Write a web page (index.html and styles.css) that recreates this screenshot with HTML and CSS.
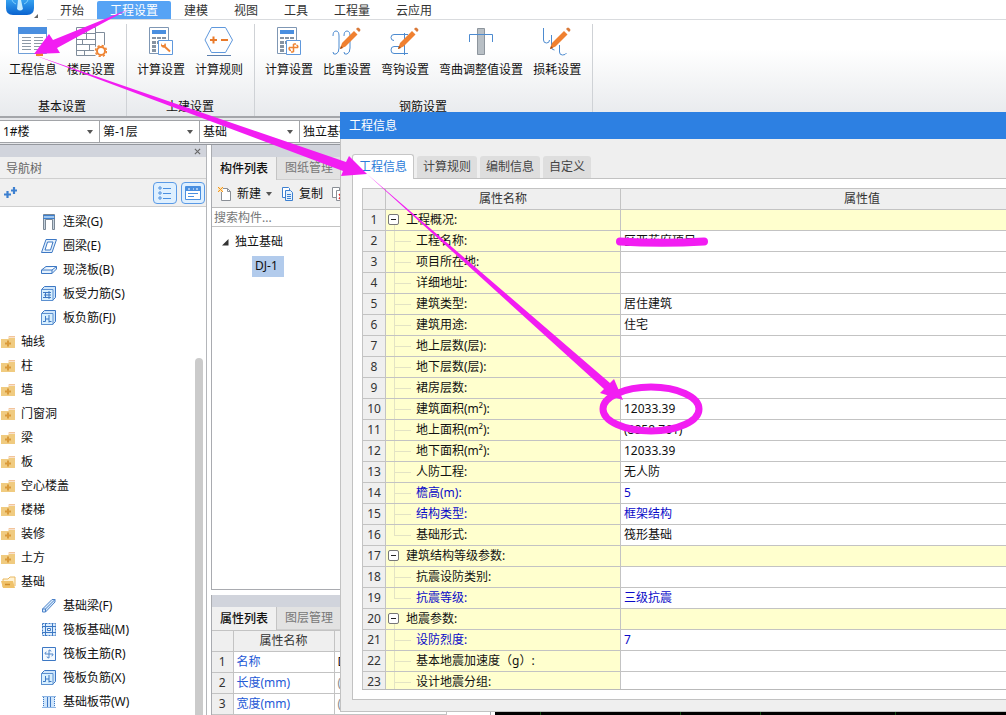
FILE: index.html
```html
<!DOCTYPE html>
<html lang="zh-CN">
<head>
<meta charset="utf-8">
<title>工程信息</title>
<link rel="stylesheet" href="styles.css">
</head>
<body>
<svg class="defs" aria-hidden="true">
  <defs>
    <linearGradient id="logo-fill" x1="0" y1="0" x2="0" y2="1"><stop offset="0" stop-color="#36a2f0"/><stop offset="1" stop-color="#0a63cf"/></linearGradient>
    <symbol id="i-folder" viewBox="0 0 15 14"><path d="M8 1h6v1.500H7z" fill="#f2c49a"/><path d="M0 4h7l1-1h6v10H0z" fill="#f0cb80"/><path d="M7 5.500v6M4 8.500h6" stroke="#d99a3a" stroke-width="2"/></symbol>
    <symbol id="i-folder-open" viewBox="0 0 15 14"><path d="M2 12V4h5l2-2h5v9" fill="#fff3d6" stroke="#e9b860"/><path d="M0 6h12l2 7H2z" fill="#f0c26a"/><path d="M4 9.500h5" stroke="#d08e2c" stroke-width="1.500"/></symbol>
    <symbol id="i-lintel" viewBox="0 0 16 16"><path d="M2.500 15.500V.5h11v15h-2v-10h-7v10z" fill="#c5d3df" stroke="#7b8794"/><path d="M2 1.500h12M2 4.500h12" stroke="#3f7fcb"/><path d="M3 3h10" stroke="#9cc6f2" stroke-width="2"/></symbol>
    <symbol id="i-ring" viewBox="0 0 16 16"><path d="M5 1.500h10.500L11 14.500H.5z" fill="#e4f1fd" stroke="#3d78c4"/><path d="M6.500 4H12l-2.500 8H4z" fill="#fff" stroke="#3d78c4"/></symbol>
    <symbol id="i-slab" viewBox="0 0 16 16"><path d="M.5 8 5 4.500h10.500V7L11 11.500H.5zM.5 8H11l4.500-3.500M11 8v3.500" fill="#e4f1fd" stroke="#3d78c4"/></symbol>
    <symbol id="i-rebar-s" viewBox="0 0 16 16"><path d="M.5 3.500 3.500.5h11v11l-3 3H.5z" fill="#cfe6fb" stroke="#3d78c4"/><path d="M.5 3.500h11.500v11H.5z" fill="#d8effe" stroke="#5c90d0"/><path d="M2 6.500h8M2 11.500h8M3 9h7M4.500 7v5M8 5v8" fill="none" stroke="#3d78c4"/></symbol>
    <symbol id="i-rebar-f" viewBox="0 0 16 16"><path d="M.5 3.500 3.500.5h11v11l-3 3H.5z" fill="#cfe6fb" stroke="#3d78c4"/><path d="M.5 3.500h11.500v11H.5z" fill="#d8effe" stroke="#5c90d0"/><path d="M2 11.500h2.500V6M4.500 9H8M8 5v7.500M8 11.500h2.500" fill="none" stroke="#3d78c4"/></symbol>
    <symbol id="i-beam" viewBox="0 0 16 16"><path d="m1.500 11 9.500-9.500h3V4L4.500 14h-3zM1.500 11h3v3M4.500 11 14 1.500" fill="#d8ebfc" stroke="#4a80c8"/></symbol>
    <symbol id="i-raft" viewBox="0 0 16 16"><path d="M1.500 1.500h13v12h-13z" fill="#dcedfd" stroke="#3d78c4" stroke-dasharray="2 1"/><path d="M1 4.500h14M1 10.500h14M4.500 1v13M11.500 1v13" stroke="#3d78c4"/><path d="M6.500 6.500h3v2h-3z" fill="#fff" stroke="#3d78c4"/></symbol>
    <symbol id="i-mainbar" viewBox="0 0 16 16"><path d="M1.500 1.500h13v13h-13z" fill="#f3f9ff" stroke="#3d78c4"/><path d="M8 4v8M4 8h8M8 4q2 0 2 1.500M8 12q-2 0-2-1.500M4 8q0-2 1.500-2M12 8q0 2-1.500 2" fill="none" stroke="#4f86cb"/></symbol>
    <symbol id="i-strip" viewBox="0 0 16 16"><path d="M2 3h12v10H2z" fill="#cfe5fb"/><path d="M1 2.500h14M1 13.500h14" stroke="#8db5e4"/><path d="M6.500 3v10M9.500 3v10" stroke="#3d78c4"/><path d="M2.500 3v10M13.500 3v10" stroke="#3d78c4" stroke-dasharray="1 1"/></symbol>
    <symbol id="i-calc" viewBox="0 0 30 30"><path d="M3.500.5h19v26h-19z" fill="#fff" stroke="#7f97b4"/><path d="M6 3h14v4H6z" fill="#4a8fe0"/><path d="M6 10h4v2H6zm5 0h4v2h-4zm5 0h4v2h-4zM6 14h4v3H6zm5 0h4v3h-4zM6 18h4v3H6zm0 4h4v3H6z" fill="#8593a3"/><path d="M12.500 13.500h14v14h-14z" fill="#fff" stroke="#5f98dc"/></symbol>
    <symbol id="i-pencil" viewBox="0 0 30 30"><path d="m8 22 2-6L22 4l3.500 3.500-12 12z" fill="#f08030"/><path d="m24 2 1-1q1-1 2 0l1 1q1 1 0 2l-1 1z" fill="#d97a3a"/><path d="m22 3 4.500 4.500" stroke="#fff"/><path d="m8 22 1-3 2 2z" fill="#a34b10"/></symbol>
  </defs>
</svg>

<header class="menubar">
  <div class="logo"><svg width="38" height="20" viewBox="0 0 38 20"><path d="M6 0h28v8q0 7-7 7H13q-7 0-7-7z" fill="url(#logo-fill)"/><path d="M18 0h3l2 9q-3 3-6 0z" fill="#c7ecff"/><path d="M12 0q1 3 4 4M28 0q-1 3-4 4" stroke="#7fd0ff" fill="none"/><path d="M38 14v4h-4z" fill="#666"/></svg></div>
  <nav class="menu">
    <button>开始</button><button class="on">工程设置</button><button>建模</button><button>视图</button><button>工具</button><button>工程量</button><button>云应用</button>
  </nav>
</header>

<section class="ribbon">
  <div class="group">
    <div class="tools">
      <button><svg width="30" height="30" viewBox="0 0 30 30"><path d="M.5.5h28v26H.5z" fill="#fff" stroke="#6f9fd8"/><path d="M0 0h29v7H0z" fill="#4a8fe0"/><path d="M4 10.500h9M16 10.500h9M4 13.500h9M16 13.500h9M4 16.500h9M16 16.500h9M4 19.500h9M16 19.500h9M4 22.500h9M16 22.500h9" stroke="#8d99a6"/><path d="M18 25h7v4h-7z" fill="#f08030"/></svg>工程信息</button>
      <button><svg width="32" height="30" viewBox="0 0 32 30"><path d="M1.500.5h19v28h-19zM1.500 6.500h19M1.500 12.500h19M1.500 17.500h19M1.500 23.500h19M11.500.5v12M7.500 12v5M14.500 17v6M9.500 23v5M20.500 5.500h9v14" fill="none" stroke="#7f8c9b"/><circle cx="26" cy="24" r="7" fill="#fff"/><circle cx="26" cy="24" r="4" fill="none" stroke="#ee8434" stroke-width="2"/><circle cx="26" cy="24" r="5.500" fill="none" stroke="#ee8434" stroke-width="1.500" stroke-dasharray="2.200 2.120"/></svg>楼层设置</button>
    </div>
    <h2>基本设置</h2>
  </div>
  <div class="group">
    <div class="tools">
      <button><svg width="30" height="30" viewBox="0 0 30 30"><use href="#i-calc"/><path d="m18 19 6 5.500" stroke="#ee8434" stroke-width="2"/><path d="M15 16v3q2 3 4 1t0-4l-1 2-2 0z" fill="#ee8434"/></svg>计算设置</button>
      <button><svg width="30" height="30" viewBox="0 0 30 30"><path d="M7.500.5h14l7 12.500-7 12.500h-14L1 13z" fill="#fdfeff" stroke="#5f98dc"/><path d="M3 28.500h24" stroke="#5b7fae"/><path d="M6 13h7M9.500 9.500v7M17 13h7" stroke="#e8792a" stroke-width="2"/></svg>计算规则</button>
    </div>
    <h2>土建设置</h2>
  </div>
  <div class="group">
    <div class="tools">
      <button><svg width="30" height="30" viewBox="0 0 30 30"><use href="#i-calc"/><path d="M15 20.500h9M19.500 17v8M15 20.500q0 3 2 3M24 20.500q0-2-1.500-2.500M19.500 17h2.500M19.500 25H17" stroke="#ee8434" stroke-width="1.500" fill="none"/></svg>计算设置</button>
      <button><svg width="30" height="30" viewBox="0 0 30 30"><path d="M1 9q0-5 3-5t3 5v12q0 5-3 6t-3-2M12 9q0-5 3-5t3 5v12q0 5-3 6t-3-2" fill="none" stroke="#4d8bd0"/><use href="#i-pencil" width="30" height="30"/></svg>比重设置</button>
      <button><svg width="30" height="30" viewBox="0 0 30 30"><path d="M18 7.500H4q-3 0-3 3t3 3M18 26.500H4q-3 0-3-3.500t3-3.500h5M14.500 6v22" fill="none" stroke="#4d8bd0"/><use href="#i-pencil" width="30" height="30"/></svg>弯钩设置</button>
      <button><svg width="30" height="30" viewBox="0 0 30 30"><path d="M11.500 1.500h7v26h-7z" fill="#b8bfc5" stroke="#8d959d"/><path d="M3.500 15V7.500h23V15" fill="none" stroke="#4d8bd0"/></svg>弯曲调整值设置</button>
      <button><svg width="30" height="30" viewBox="0 0 30 30"><path d="M1.500 1v12q0 3 3 3t3-3M9.500 8v12q0 3 3 3M17.500 18v7q0 3 3 3t4-2" fill="none" stroke="#4d8bd0"/><use href="#i-pencil" width="30" height="30"/></svg>损耗设置</button>
    </div>
    <h2>钢筋设置</h2>
  </div>
</section>

<section class="selectors">
  <label class="pick"><select aria-label="单体"><option>1#楼</option></select></label>
  <label class="pick"><select aria-label="楼层"><option>第-1层</option></select></label>
  <label class="pick"><select aria-label="类别"><option>基础</option></select></label>
  <label class="pick"><select aria-label="构件类型"><option>独立基础</option></select></label>
</section>

<main class="workspace">
  <aside class="nav">
    <div class="strip"><button class="close" aria-label="关闭"><svg width="7" height="7" viewBox="0 0 8 8"><path d="m1 1 6 6M7 1 1 7" stroke="#666" stroke-width="1.300"/></svg></button></div>
    <h3>导航树</h3>
    <div class="navtools">
      <svg width="14" height="12" viewBox="0 0 14 12"><path d="M0 7.500h7M3.500 4v7M7 3.500h6M10 0v7" stroke="#3d80d0" stroke-width="2.200"/></svg>
      <button class="toggle" aria-label="列表"><svg width="14" height="14" viewBox="0 0 14 14"><path d="M1 1h2v2H1zM1 6h2v2H1zM1 11h2v2H1z" fill="#fff" stroke="#4a8fe0"/><path d="M5 2.500h8M5 7.500h8M5 12.500h8" stroke="#4a8fe0"/></svg></button>
      <button class="toggle" aria-label="面板"><svg width="16" height="14" viewBox="0 0 16 14"><path d="M.5.5h15v13H.5z" fill="#fff" stroke="#4a8fe0"/><path d="M1 1h14v4H1z" fill="#4a8fe0"/><path d="M3 3h2M8 3h1M11 3h2" stroke="#fff"/><path d="M3 7.500h10M3 10.500h6" stroke="#4a8fe0"/></svg></button>
    </div>
    <ul class="tree">
      <li class="sub"><svg><use href="#i-lintel"/></svg>连梁(G)</li>
      <li class="sub"><svg><use href="#i-ring"/></svg>圈梁(E)</li>
      <li class="sub"><svg><use href="#i-slab"/></svg>现浇板(B)</li>
      <li class="sub"><svg><use href="#i-rebar-s"/></svg>板受力筋(S)</li>
      <li class="sub"><svg><use href="#i-rebar-f"/></svg>板负筋(FJ)</li>
      <li><svg><use href="#i-folder"/></svg>轴线</li>
      <li><svg><use href="#i-folder"/></svg>柱</li>
      <li><svg><use href="#i-folder"/></svg>墙</li>
      <li><svg><use href="#i-folder"/></svg>门窗洞</li>
      <li><svg><use href="#i-folder"/></svg>梁</li>
      <li><svg><use href="#i-folder"/></svg>板</li>
      <li><svg><use href="#i-folder"/></svg>空心楼盖</li>
      <li><svg><use href="#i-folder"/></svg>楼梯</li>
      <li><svg><use href="#i-folder"/></svg>装修</li>
      <li><svg><use href="#i-folder"/></svg>土方</li>
      <li><svg><use href="#i-folder-open"/></svg>基础</li>
      <li class="sub"><svg><use href="#i-beam"/></svg>基础梁(F)</li>
      <li class="sub"><svg><use href="#i-raft"/></svg>筏板基础(M)</li>
      <li class="sub"><svg><use href="#i-mainbar"/></svg>筏板主筋(R)</li>
      <li class="sub"><svg><use href="#i-rebar-f"/></svg>筏板负筋(X)</li>
      <li class="sub"><svg><use href="#i-strip"/></svg>基础板带(W)</li>
    </ul>
    <div class="scrollbar"></div>
  </aside>

  <div class="middle">
    <section class="panel components">
      <div class="strip"></div>
      <div class="ptabs"><button class="on">构件列表</button><button>图纸管理</button></div>
      <div class="ptools">
        <button><svg width="14" height="14" viewBox="0 0 14 14"><path d="M3.500 1.500h6l3 3v9h-9z" fill="#fff" stroke="#8a8f96"/><path d="M9.500 1.500v3h3" fill="none" stroke="#8a8f96"/><path d="M0 0h5v5H0z" fill="#fde3b5"/><path d="M0 0l5 5M5 0 0 5" stroke="#f0941e"/></svg>新建<i class="caret"></i></button>
        <button><svg width="13" height="14" viewBox="0 0 13 14"><path d="M1.500.5h6l1 1v9h-7z" fill="#fff" stroke="#3d80d0"/><path d="M4.500 3.500h5l2 2v8h-7z" fill="#e4f1fd" stroke="#3d80d0"/><path d="M6 7.500h4M6 9.500h4M6 11.500h4" stroke="#3d80d0"/></svg>复制</button>
        <button aria-label="删除"><svg width="13" height="14" viewBox="0 0 13 14"><path d="M.5.500h7v10h-7z" fill="#fff" stroke="#8a8f96"/><path d="M4.500 3.500h7v10h-7z" fill="#fff" stroke="#8a8f96"/><path d="m7 7 4 5M11 7l-4 5" stroke="#d33" stroke-width="1.500"/></svg></button>
      </div>
      <input class="search" type="text" placeholder="搜索构件..." aria-label="搜索构件">
      <ul class="ctree">
        <li><svg width="7" height="7" viewBox="0 0 7 7"><path d="M6.500 0v6.500H0z" fill="#333"/></svg>独立基础</li>
        <li class="leaf"><span>DJ-1</span></li>
      </ul>
    </section>
    <section class="panel props">
      <div class="strip"></div>
      <div class="ptabs"><button class="on">属性列表</button><button>图层管理</button></div>
      <table class="ptable">
        <colgroup><col class="c-num"><col class="c-pname"><col></colgroup>
        <tr><th></th><th>属性名称</th><th></th></tr>
        <tr><td class="num">1</td><td>名称</td><td class="dark">DJ-1</td></tr>
        <tr><td class="num">2</td><td>长度(mm)</td><td class="dim">(0)</td></tr>
        <tr><td class="num">3</td><td>宽度(mm)</td><td class="dim">(0)</td></tr>
      </table>
    </section>
  </div>
  <div class="canvas"></div>
</main>

<div class="dialog" role="dialog" aria-label="工程信息">
  <div class="title">工程信息</div>
  <div class="dbody">
    <div class="dtabs"><button class="on">工程信息</button><button>计算规则</button><button>编制信息</button><button>自定义</button></div>
    <div class="page">
      <div class="gridbox">
      <table class="grid">
        <colgroup><col class="c-idx"><col class="c-name"><col></colgroup>
        <tr><th></th><th>属性名称</th><th>属性值</th></tr>
        <tr class="cat"><td>1</td><td><button class="fold" aria-label="折叠"></button>工程概况:</td><td></td></tr>
        <tr><td>2</td><td>工程名称:</td><td>区亚花府项目</td></tr>
        <tr><td>3</td><td>项目所在地:</td><td></td></tr>
        <tr><td>4</td><td>详细地址:</td><td></td></tr>
        <tr><td>5</td><td>建筑类型:</td><td>居住建筑</td></tr>
        <tr><td>6</td><td>建筑用途:</td><td>住宅</td></tr>
        <tr><td>7</td><td>地上层数(层):</td><td></td></tr>
        <tr><td>8</td><td>地下层数(层):</td><td></td></tr>
        <tr><td>9</td><td>裙房层数:</td><td></td></tr>
        <tr><td>10</td><td>建筑面积(m²):</td><td>12033.39</td></tr>
        <tr><td>11</td><td>地上面积(m²):</td><td>(8858.761)</td></tr>
        <tr><td>12</td><td>地下面积(m²):</td><td>12033.39</td></tr>
        <tr><td>13</td><td>人防工程:</td><td>无人防</td></tr>
        <tr class="key"><td>14</td><td>檐高(m):</td><td>5</td></tr>
        <tr class="key"><td>15</td><td>结构类型:</td><td>框架结构</td></tr>
        <tr class="last"><td>16</td><td>基础形式:</td><td>筏形基础</td></tr>
        <tr class="cat"><td>17</td><td><button class="fold" aria-label="折叠"></button>建筑结构等级参数:</td><td></td></tr>
        <tr><td>18</td><td>抗震设防类别:</td><td></td></tr>
        <tr class="key last"><td>19</td><td>抗震等级:</td><td>三级抗震</td></tr>
        <tr class="cat"><td>20</td><td><button class="fold" aria-label="折叠"></button>地震参数:</td><td></td></tr>
        <tr class="key"><td>21</td><td>设防烈度:</td><td>7</td></tr>
        <tr><td>22</td><td>基本地震加速度（g）:</td><td></td></tr>
        <tr><td>23</td><td>设计地震分组:</td><td></td></tr>
      </table>
      </div>
    </div>
  </div>
</div>

<svg class="marks" width="1006" height="715" viewBox="0 0 1006 715" aria-hidden="true">
  <g fill="#f21df2">
    <path d="M34 54 49 34 53 40 127 10 57 48 60 53z"/>
    <path d="M34 55 346 162 349 156 367 174 341 176 343 171z"/>
    <path d="M367 174 610 383 614 379 623 400 600 393 604 389z"/>
  </g>
  <path d="M620 241.500Q662 244 704 241.500" fill="none" stroke="#f21df2" stroke-width="8" stroke-linecap="round"/>
  <ellipse cx="651" cy="409" rx="48" ry="22" fill="none" stroke="#f21df2" stroke-width="7"/>
</svg>
</body>
</html>
```
FILE: styles.css
```css
* { box-sizing: border-box; }

body {
  margin: 0;
  height: 100vh;
  display: flex;
  flex-direction: column;
  position: relative;
  overflow: hidden;
  background: #fff;
  color: #111;
  font: 12px/18px "Noto Sans", "Noto Sans CJK SC", sans-serif;
}

button, input, select { font: inherit; color: inherit; }
button { border: 0; background: none; padding: 0; }
h2, h3, ul { margin: 0; padding: 0; font-size: 12px; font-weight: 400; list-style: none; }
svg { display: block; flex: none; }
.defs { position: absolute; width: 0; height: 0; }

/* menu bar */
.menubar { display: flex; height: 20px; flex: none; }
.logo { width: 47px; flex: none; }
.menu { display: flex; flex: 1; border-bottom: 1px solid #d9dbde; }
.menu button { padding: 1px 13px 0; color: #333; line-height: 20px; }
.menu .on { background: #56a3f5; color: #fff; margin-top: 1px; border-radius: 2px 2px 0 0; line-height: 18px; }

/* ribbon */
.ribbon {
  display: flex;
  flex: none;
  height: 98px;
  background: linear-gradient(#fff 30%, #e8eaed);
  border-bottom: 2px solid #a4a6aa;
}
.group { display: flex; flex-direction: column; justify-content: space-between; margin-top: 4px; padding: 3px 6px 0 5px; border-right: 1px solid #cfd2d6; }
.group:first-child { padding-left: 4px; }
.tools { display: flex; }
.tools button { display: flex; flex-direction: column; align-items: center; gap: 4px; padding: 0 5px; }
.group h2 { text-align: center; line-height: 18px; }

/* selectors */
.selectors { display: flex; flex: none; height: 27px; padding: 2px 0; background: #e6e7ea; border-bottom: 1px solid #95989e; }
.pick { position: relative; width: 100px; }
.pick select { appearance: none; width: 100%; height: 23px; padding: 0 3px; background: #fff; border: solid #a2a4a8; border-width: 1px 1px 1px 0; border-radius: 0; }
.pick::after { content: ""; position: absolute; right: 7px; top: 10px; border: 3px solid transparent; border-top: 4px solid #555; border-bottom: 0; }

/* workspace */
.workspace { display: flex; flex: 1; min-height: 0; }
.strip { height: 12px; flex: none; background: #d1d4dc; text-align: right; }

.nav { position: relative; display: flex; flex-direction: column; width: 207px; flex: none; border-right: 1px solid #b4b6ba; }
.nav .strip { display: flex; align-items: center; justify-content: flex-end; padding-right: 5px; }
.nav h3 { padding: 0 6px; height: 22px; line-height: 23px; color: #666; background: #f0f0f0; border-bottom: 1px solid #cfcfcf; }
.navtools { display: flex; align-items: center; gap: 4px; height: 28px; padding: 0 1px 0 4px; background: #f0f0f0; border-bottom: 1px solid #cfcfcf; }
.navtools > svg { margin-right: auto; }
.toggle { display: flex; align-items: center; justify-content: center; width: 24px; height: 22px; border: 1px solid #5a9ae6; border-radius: 4px; background: #dff0ff; }
.tree { padding-top: 3px; overflow: hidden; flex: 1; }
.tree li { display: flex; align-items: center; gap: 5px; height: 24px; padding-left: 1px; white-space: nowrap; }
.tree svg { width: 15px; height: 14px; }
.tree .sub { padding-left: 41px; gap: 6px; }
.tree .sub svg { width: 16px; height: 16px; }
.scrollbar { position: absolute; right: 3px; top: 213px; bottom: 0; width: 8px; border-radius: 4px 4px 0 0; background: #cbcbcb; }

.middle { display: flex; flex-direction: column; gap: 5px; width: 284px; flex: none; padding-left: 4px; }
.panel { display: flex; flex-direction: column; border: 1px solid #a9abb0; border-top: 0; }
.components { flex: 1; }
.props { height: 120px; flex: none; border-bottom: 0; }
.ptabs { display: flex; flex: none; height: 23px; background: #e2e2e2; }
.ptabs button { width: 65px; color: #777; border-right: 1px solid #c4c4c4; border-bottom: 1px solid #cfcfcf; }
.ptabs .on { color: #111; font-weight: 500; background: #f0f0f0; border-bottom: 0; }
.ptools { display: flex; align-items: center; gap: 9px; height: 28px; padding: 0 6px; background: #f0f0f0; border-bottom: 1px solid #bbb; }
.ptools button { display: flex; align-items: center; gap: 5px; }
.caret { border: 3px solid transparent; border-top: 4px solid #555; border-bottom: 0; }
.search { height: 19px; padding: 0 2px; border: 0; border-bottom: 1px solid #c4c4c4; }
.search::placeholder { color: #777; }
.ctree { flex: 1; padding-top: 3px; }
.ctree li { display: flex; align-items: center; gap: 6px; height: 24px; padding-left: 10px; }
.ctree .leaf { padding-left: 40px; }
.leaf span { padding: 1px 6px 2px 3px; background: #b2cbec; }

table { border-collapse: collapse; table-layout: fixed; }
th { font-weight: 400; background: #efefef; color: #333; }
th, td { padding: 0; height: 21px; border: 1px solid #c3c3c3; overflow: hidden; white-space: nowrap; }
.ptable { width: 235px; }
.ptable th:first-child, .ptable td:first-child { border-left: 0; }
.c-num { width: 21px; }
.c-pname { width: 101px; }
.ptable td { padding-left: 3px; color: #2459d6; }
.ptable .num { padding: 0; text-align: center; background: #efefef; color: #333; }
.ptable .dark { color: #111; }
.ptable .dim { color: #888; }

.canvas {
  flex: 1;
  margin-left: 4px;
  background: linear-gradient(90deg, transparent 45px, #124d12 45px 46px, transparent 46px 185px, #124d12 185px 186px, transparent 186px 265px, #124d12 265px 266px, transparent 266px 400px, #124d12 400px 401px, transparent 401px) #000;
}

/* dialog */
.dialog { position: absolute; left: 340px; right: -120px; top: 112px; bottom: 3px; display: flex; flex-direction: column; background: #efefef; border: solid #c2c2c2; border-width: 0 1px 1px; }
.title { flex: none; height: 27px; margin-left: -1px; padding-left: 9px; line-height: 27px; color: #fff; background: #2d80e2; }
.dbody { display: flex; flex-direction: column; flex: 1; min-height: 0; padding: 15px 11px 11px; }
.dtabs { display: flex; align-items: flex-end; gap: 3px; height: 24px; flex: none; }
.dtabs button { height: 22px; padding: 0 6px; color: #444; background: #dedede; border-radius: 3px 3px 0 0; }
.dtabs .on { height: 25px; margin: 0 0 -1px; padding: 0 6px; color: #2b7bd8; background: #fff; border: 1px solid #c6c6c6; border-bottom: 0; z-index: 1; }
.page { flex: 1; min-height: 0; display: flex; padding: 9px; background: #fff; border: 1px solid #c2c2c2; }
.gridbox { flex: 1; overflow: hidden; border-bottom: 1px solid #b9b9b9; }
.grid { width: 100%; }
.c-idx { width: 23px; }
.c-name { width: 235px; }
.grid td:nth-child(1) { text-align: center; background: #efefef; color: #333; }
.grid td:nth-child(2) { position: relative; padding-left: 30px; background: #ffffce; }
.grid td:nth-child(3) { padding-left: 3px; }
.grid .cat td:nth-child(2) { padding-left: 20px; }
.grid .cat td:nth-child(3) { background: #ffffce; }
.grid .key td:nth-child(n+2) { color: #0a0ac8; }
.grid td:nth-child(2)::before { content: ""; position: absolute; left: 8px; top: 0; bottom: 0; border-left: 1px solid #e3e3c4; }
.grid tr:not(.cat) td:nth-child(2)::after { content: ""; position: absolute; left: 8px; top: 10px; width: 17px; border-top: 1px solid #e3e3c4; }
.grid .last td:nth-child(2)::before { bottom: 10px; }
.grid .cat td:nth-child(2)::before { top: 15px; }
.fold { position: absolute; left: 2px; top: 4px; width: 11px; height: 11px; border: 1px solid #777; border-radius: 2px; background: #fff; }
.fold::after { content: ""; position: absolute; left: 2px; right: 2px; top: 4px; border-top: 1px solid #222; }

.marks { position: absolute; left: 0; top: 0; z-index: 5; pointer-events: none; }
```
